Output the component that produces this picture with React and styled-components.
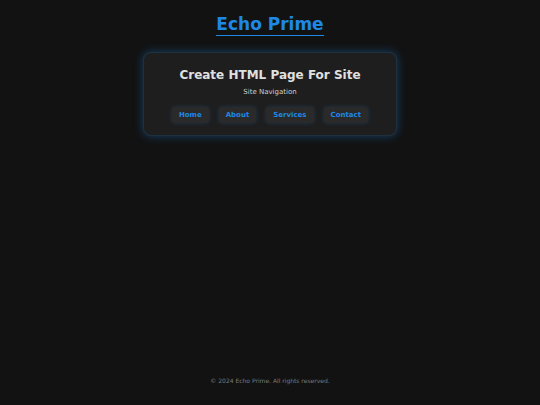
import styled, { createGlobalStyle } from "styled-components";

const GlobalStyle = createGlobalStyle`
  html, body {
    margin: 0;
    padding: 0;
    background: #121212;
  }
  body {
    font-family: "DejaVu Sans", Verdana, sans-serif;
    color: #e0e0e0;
  }
`;

const links = ["Home", "About", "Services", "Contact"];

const App = () => {
  return (
    <>
      <GlobalStyle />
      <Page>
        <Header>
          <SiteTitle>Echo Prime</SiteTitle>
        </Header>
        <Main>
          <Card>
            <CardTitle>Create HTML Page For Site</CardTitle>
            <NavLabel>Site Navigation</NavLabel>
            <Nav>
              {links.map((link) => (
                <NavButton key={link} href="#">
                  {link}
                </NavButton>
              ))}
            </Nav>
          </Card>
        </Main>
        <Footer>© 2024 Echo Prime. All rights reserved.</Footer>
      </Page>
    </>
  );
};
export default App;

const Page = styled.div`
  min-height: 100vh;
  display: flex;
  flex-direction: column;
  align-items: center;
`;

const Header = styled.header`
  padding-top: 14px;
  display: flex;
  justify-content: center;
`;

const SiteTitle = styled.h1`
  margin: 0;
  font-size: 17px;
  line-height: 20px;
  font-weight: bold;
  color: #1e88e5;
  padding-bottom: 1px;
  border-bottom: 1px solid #1e88e5;
`;

const Main = styled.main`
  flex: 1;
  padding-top: 16px;
`;

const Card = styled.section`
  width: 254px;
  box-sizing: border-box;
  padding: 14px 0 12px;
  background: #1e1e1e;
  border: 1px solid rgba(30, 136, 229, 0.18);
  border-radius: 8px;
  box-shadow: 0 0 10px rgba(30, 136, 229, 0.4);
  display: flex;
  flex-direction: column;
  align-items: center;
`;

const CardTitle = styled.h2`
  margin: 0;
  font-size: 12px;
  line-height: 16px;
  font-weight: bold;
  color: #e0e0e0;
`;

const NavLabel = styled.p`
  margin: 5px 0 0;
  font-size: 7px;
  line-height: 9px;
  color: #cfcfcf;
`;

const Nav = styled.nav`
  margin-top: 10px;
  display: flex;
  gap: 10px;
`;

const NavButton = styled.a`
  display: block;
  padding: 4px 7px;
  font-size: 7px;
  line-height: 8px;
  font-weight: bold;
  color: #1e88e5;
  text-decoration: none;
  background: #2a2a2a;
  border-radius: 3px;
  box-shadow: 0 0 4px rgba(30, 136, 229, 0.25);
`;

const Footer = styled.footer`
  padding-bottom: 20px;
  font-size: 6px;
  line-height: 8px;
  color: #7a7a7a;
`;
